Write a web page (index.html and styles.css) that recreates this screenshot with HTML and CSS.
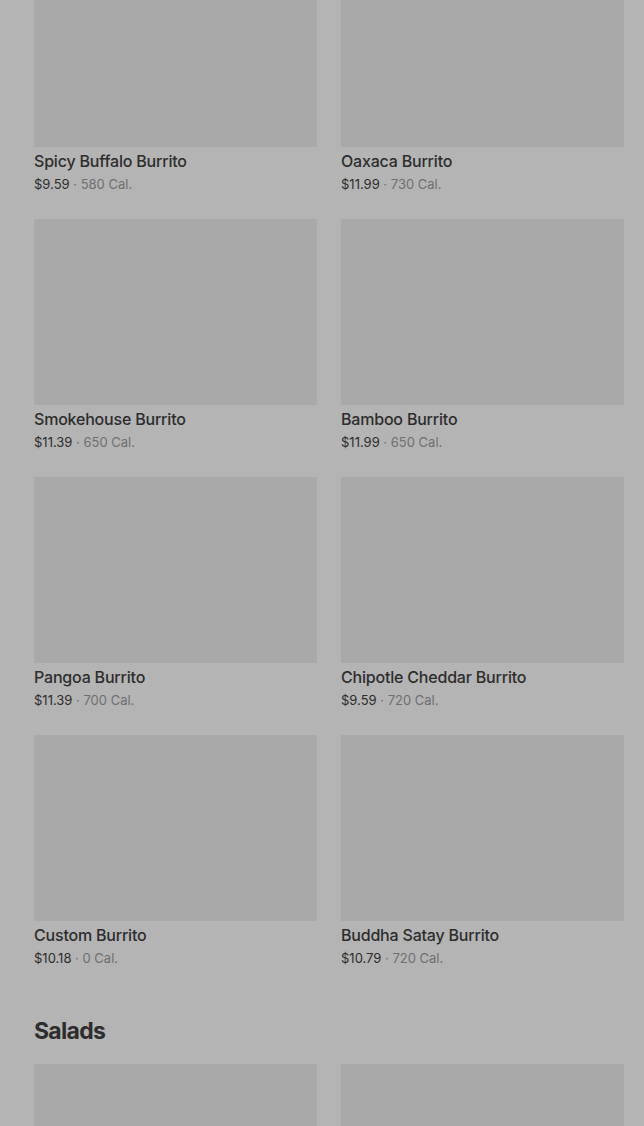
FILE: index.html
```html
<!DOCTYPE html>
<html lang="en">
<head>
    <meta charset="UTF-8">
    <meta name="viewport" content="width=device-width, initial-scale=1.0">
    <title>Menu</title>
    <link rel="stylesheet" href="styles.css">
</head>
<body>

<div class="menu">
    <section class="menu-section">
        <div class="item-grid first">
            <div class="item">
                <div class="item-image"></div>
                <div class="item-name">Spicy Buffalo Burrito</div>
                <div class="item-meta"><span class="price">$9.59</span> · 580 Cal.</div>
            </div>
            <div class="item">
                <div class="item-image"></div>
                <div class="item-name">Oaxaca Burrito</div>
                <div class="item-meta"><span class="price">$11.99</span> · 730 Cal.</div>
            </div>
            <div class="item">
                <div class="item-image"></div>
                <div class="item-name">Smokehouse Burrito</div>
                <div class="item-meta"><span class="price">$11.39</span> · 650 Cal.</div>
            </div>
            <div class="item">
                <div class="item-image"></div>
                <div class="item-name">Bamboo Burrito</div>
                <div class="item-meta"><span class="price">$11.99</span> · 650 Cal.</div>
            </div>
            <div class="item">
                <div class="item-image"></div>
                <div class="item-name">Pangoa Burrito</div>
                <div class="item-meta"><span class="price">$11.39</span> · 700 Cal.</div>
            </div>
            <div class="item">
                <div class="item-image"></div>
                <div class="item-name">Chipotle Cheddar Burrito</div>
                <div class="item-meta"><span class="price">$9.59</span> · 720 Cal.</div>
            </div>
            <div class="item">
                <div class="item-image"></div>
                <div class="item-name">Custom Burrito</div>
                <div class="item-meta"><span class="price">$10.18</span> · 0 Cal.</div>
            </div>
            <div class="item">
                <div class="item-image"></div>
                <div class="item-name">Buddha Satay Burrito</div>
                <div class="item-meta"><span class="price">$10.79</span> · 720 Cal.</div>
            </div>
        </div>
    </section>

    <section class="menu-section">
        <h2>Salads</h2>
        <div class="item-grid">
            <div class="item">
                <div class="item-image"></div>
            </div>
            <div class="item">
                <div class="item-image"></div>
            </div>
        </div>
    </section>
</div>

</body>
</html>
```

FILE: styles.css
```css
body {
    margin: 0;
    background-color: #b4b4b4;
    font-family: Inter, "Noto Sans", sans-serif;
    color: #2d2d2d;
    overflow: hidden;
}
.menu {
    padding: 0 20px 0 34px;
}
.menu-section {
    margin-bottom: 46px;
}
.item-grid {
    display: grid;
    grid-template-columns: 1fr 1fr;
    column-gap: 24px;
    row-gap: 24px;
}
.item-grid.first {
    margin-top: -39px;
}
.item-image {
    height: 186px;
    background-color: #a9a9a9;
}
.item-name {
    margin-top: 2px;
    font-size: 16px;
    font-weight: 500;
    line-height: 24px;
    letter-spacing: -0.2px;
}
.item-meta {
    font-size: 13px;
    line-height: 22px;
    color: #6f6f6f;
}
.item-meta .price {
    color: #2d2d2d;
}
h2 {
    margin: 0 0 17px;
    font-size: 23px;
    line-height: 32px;
    font-weight: 700;
    letter-spacing: -0.7px;
}
```
